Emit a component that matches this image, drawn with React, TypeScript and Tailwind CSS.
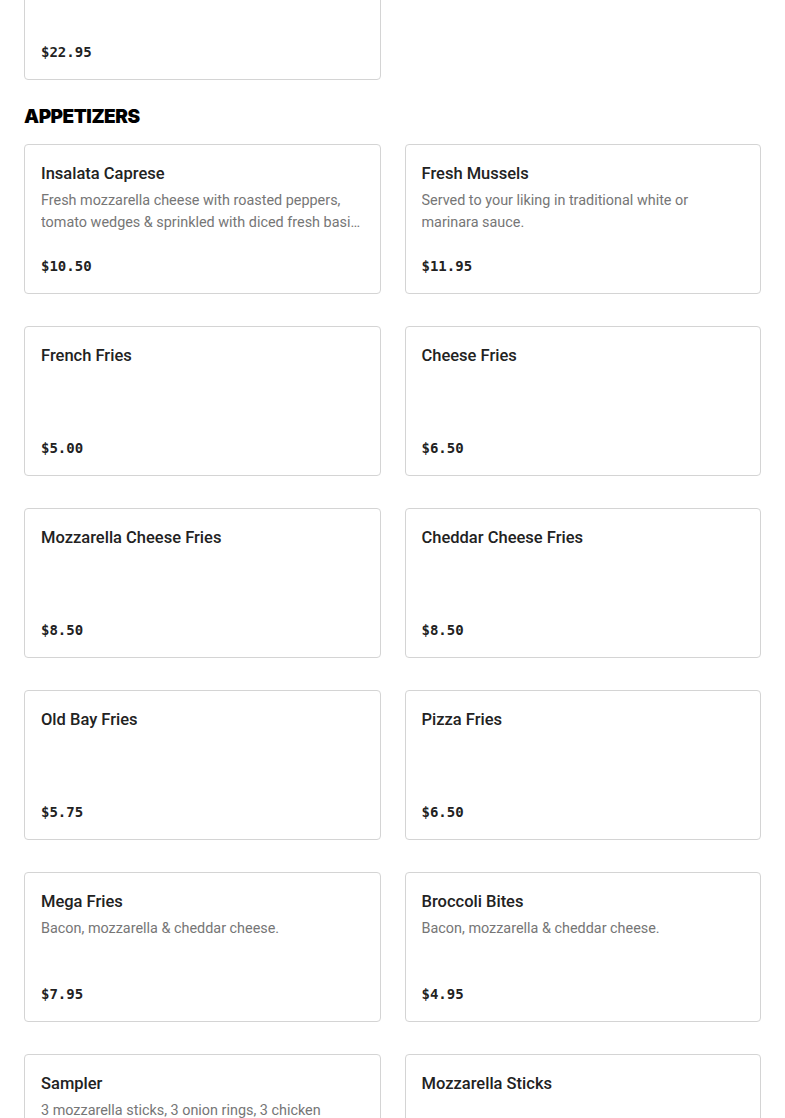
type Item = { name: string; desc?: string; price: string };

const appetizers: Item[] = [
  {
    name: 'Insalata Caprese',
    desc: 'Fresh mozzarella cheese with roasted peppers, tomato wedges & sprinkled with diced fresh basil & extra virgin olive oil.',
    price: '$10.50',
  },
  { name: 'Fresh Mussels', desc: 'Served to your liking in traditional white or marinara sauce.', price: '$11.95' },
  { name: 'French Fries', price: '$5.00' },
  { name: 'Cheese Fries', price: '$6.50' },
  { name: 'Mozzarella Cheese Fries', price: '$8.50' },
  { name: 'Cheddar Cheese Fries', price: '$8.50' },
  { name: 'Old Bay Fries', price: '$5.75' },
  { name: 'Pizza Fries', price: '$6.50' },
  { name: 'Mega Fries', desc: 'Bacon, mozzarella & cheddar cheese.', price: '$7.95' },
  { name: 'Broccoli Bites', desc: 'Bacon, mozzarella & cheddar cheese.', price: '$4.95' },
  {
    name: 'Sampler',
    desc: '3 mozzarella sticks, 3 onion rings, 3 chicken fingers & 3 jalapeño poppers.',
    price: '$12.95',
  },
  { name: 'Mozzarella Sticks', price: '$7.50' },
];

function MenuCard({ item }: { item: Item }) {
  return (
    <div className="flex flex-col h-[150px] border border-[#d4d4d4] rounded-[4px] bg-white px-4 pt-4 pb-[17px]">
      <h3 className="text-[16.5px] leading-6 font-medium text-[#222] pt-px">{item.name}</h3>
      {item.desc && (
        <p className="mt-1 text-[14.4px] leading-[22px] text-[#767676] line-clamp-2">{item.desc}</p>
      )}
      <div className="mt-auto font-['DejaVu_Sans_Mono',monospace] font-bold text-[14px] leading-5 text-[#222]">
        {item.price}
      </div>
    </div>
  );
}

export default function App() {
  return (
    <div className="min-h-screen bg-white px-6 font-['Roboto',sans-serif] overflow-hidden">
      <div className="grid grid-cols-2 gap-6 -mt-[70px]">
        <MenuCard item={{ name: 'Chicken Parmigiana', price: '$22.95' }} />
      </div>
      <h2 className="mt-[25px] mb-[15px] font-['Inter',sans-serif] text-[19px] leading-6 font-black tracking-tight text-black">
        APPETIZERS
      </h2>
      <div className="grid grid-cols-2 gap-x-6 gap-y-8 pb-10">
        {appetizers.map((item) => (
          <MenuCard key={item.name} item={item} />
        ))}
      </div>
    </div>
  );
}
